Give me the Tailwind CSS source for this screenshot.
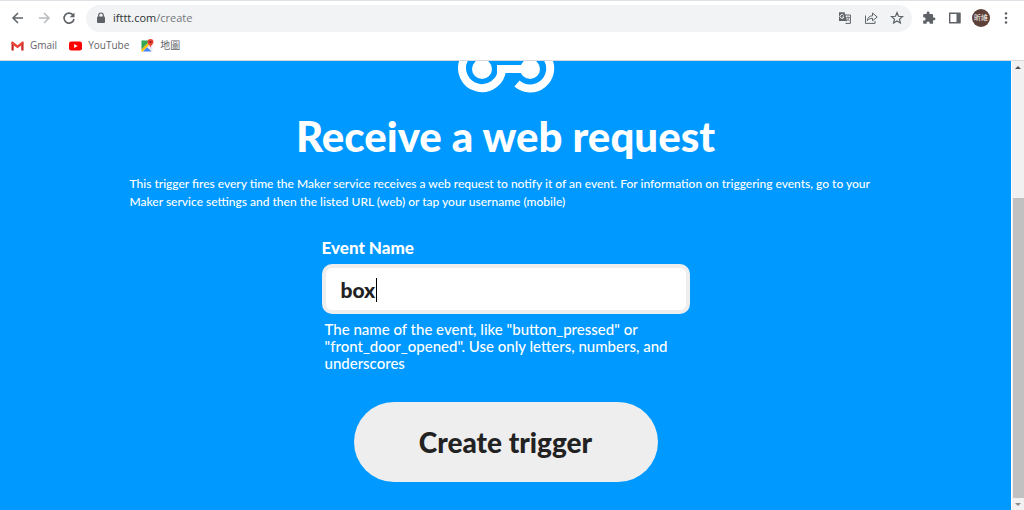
<!DOCTYPE html>
<html lang="en">
<head>
<meta charset="utf-8">
<meta name="viewport" content="width=device-width, initial-scale=1">
<title>ifttt.com/create</title>
<script src="https://cdn.jsdelivr.net/npm/@tailwindcss/browser@4"></script>
</head>
<body class="flex h-screen flex-col overflow-hidden bg-white font-['Lato','Noto_Sans_CJK_TC',sans-serif]">
<header class="shrink-0 border-t border-b border-t-[#dee1e6] border-b-[#d5d8dc] font-['Open_Sans','Noto_Sans_CJK_TC',sans-serif] text-[#5f6368]">
  <div class="flex h-[34px] items-center pr-[11px] pl-2.5">
    <button class="grid size-4 place-items-center" aria-label="Back"><svg class="size-4" viewBox="0 0 16 16" fill="none" stroke="#5f6368" stroke-width="1.5"><path d="M13 8H3M8 3L3 8l5 5"/></svg></button>
    <button class="ml-2.5 grid size-4 place-items-center" aria-label="Forward"><svg class="size-4" viewBox="0 0 16 16" fill="none" stroke="#b9bbbe" stroke-width="1.5"><path d="M3 8h10M8 3l5 5-5 5"/></svg></button>
    <button class="ml-[9px] grid size-4 place-items-center" aria-label="Reload"><svg class="size-4" viewBox="0 0 16 16" fill="none" stroke="#5f6368" stroke-width="1.6"><path d="M12.2 5.3A5 5 0 1 0 13 9"/><path d="M13.5 2.5v4.8H8.7z" fill="#5f6368" stroke="none"/></svg></button>
    <div class="ml-[9px] flex h-[27px] flex-1 items-center rounded-full bg-[#f1f3f4] pr-2 pl-2">
      <svg class="size-3.5" viewBox="0 0 14 14" fill="#5f6368"><rect x="3" y="5.5" width="8" height="6.5" rx="1"/><path d="M4.700 6V4.300a2.300 2.300 0 0 1 4.600 0V6" fill="none" stroke="#5f6368" stroke-width="1.2"/></svg>
      <span class="relative ml-[5px] flex h-5 flex-1 text-[11px] leading-5">
        <input class="w-full bg-transparent text-transparent outline-none" aria-label="Address" value="ifttt.com/create">
        <span class="pointer-events-none absolute inset-0 text-[#303236]" aria-hidden="true">ifttt.com<span class="text-[#74787c]">/create</span></span>
      </span>
      <button aria-label="Translate"><svg class="size-3.5" viewBox="0 0 14 14"><path d="M6 4h6.400v8.400H7.500" fill="#f1f3f4" stroke="#5f6368"/><path d="M1 1.200h5.600L9 10H1z" fill="#5f6368"/><path d="M5.800 4.400A2 2 0 1 0 6 6H4.200" fill="none" stroke="#fff" stroke-width=".9"/><path d="M8.200 6.500h3.600M10 5.400v1M11 6.500c-.3 1.600-1.300 2.800-2.400 3.600M9 7.400l2.400 2.800" fill="none" stroke="#5f6368" stroke-width=".8"/></svg></button>
      <button class="ml-3" aria-label="Share"><svg class="size-3.5" viewBox="0 0 14 14" fill="none" stroke="#5f6368"><path d="M1.500 4.500v7.900h9.500V10"/><path d="M3.300 9.700c.3-3 2-4.800 5.200-4.900V2L13.200 6 8.500 9.800V7.300c-2.200 0-3.900.8-5.200 2.400z"/></svg></button>
      <button class="ml-3" aria-label="Bookmark"><svg class="size-3.5" viewBox="0 0 14 14" fill="none" stroke="#5f6368" stroke-width="1.200"><path d="M7 1.600l1.500 3.700 4 .3-3 2.600.9 3.900L7 10l-3.400 2.100.9-3.900-3-2.600 4-.3z"/></svg></button>
    </div>
    <button class="ml-2.5 size-3.5" aria-label="Extensions"><svg class="size-3.5" viewBox="0 0 24 24" fill="#5f6368"><path d="M20.500 11H19V7a2 2 0 0 0-2-2h-4V3.500a2.500 2.500 0 0 0-5 0V5H4a2 2 0 0 0-2 2v3.800h1.500a2.700 2.700 0 0 1 0 5.400H2V20a2 2 0 0 0 2 2h3.800v-1.500a2.700 2.700 0 0 1 5.400 0V22H17a2 2 0 0 0 2-2v-4h1.500a2.500 2.500 0 0 0 0-5z"/></svg></button>
    <button class="ml-3 size-3.5" aria-label="Side panel"><svg class="size-3.5" viewBox="0 0 14 14"><path d="M1.700 2.200h10.100v9.600H1.700z" fill="none" stroke="#5f6368" stroke-width="1.400"/><path d="M8.500 2h4v10h-4z" fill="#5f6368"/></svg></button>
    <button class="ml-2.5 size-[18px] rounded-full bg-[#5d4037] text-center text-[7px] leading-[18px] text-white" aria-label="Profile">昕維</button>
    <button class="ml-[9px] size-3.5" aria-label="Menu"><svg class="size-3.5" viewBox="0 0 14 14" fill="#5f6368"><circle cx="7" cy="2.500" r="1.300"/><circle cx="7" cy="7" r="1.300"/><circle cx="7" cy="11.500" r="1.300"/></svg></button>
  </div>
  <nav class="flex h-[25px] items-center gap-3 pb-1 pl-[11px] text-[10px]" aria-label="Bookmarks">
    <a href="#" class="flex items-center gap-1.5"><svg class="h-3 w-[13px]" viewBox="0 0 13 12"><path d="M.5 2v8.500h2.200V5z" fill="#c5221f"/><path d="M12.500 2v8.500h-2.200V5z" fill="#c5221f"/><path d="M.5 1.500h1.300L6.500 5.200l4.700-3.700h1.300v2.300L6.500 8.200.5 3.800z" fill="#ea4335"/></svg>Gmail</a>
    <a href="#" class="flex items-center gap-1.5"><svg class="h-3 w-[13px]" viewBox="0 0 13 12"><rect y="1.500" width="13" height="9" rx="2.200" fill="#f00"/><path d="M5.200 4v4l3.400-2z" fill="#fff"/></svg>YouTube</a>
    <a href="#" class="flex items-center gap-1.5"><svg class="size-[13px]" viewBox="0 0 13 13"><rect x=".5" y="1.500" width="11" height="11" rx="1" fill="#e8eaed"/><path d="M.5 1.500h9L.5 10.500z" fill="#34a853"/><path d="M2 12.500l4-4.200 4.500 4.200z" fill="#4285f4"/><path d="M.5 12.500v-2L8 3l1.500 1.500-8 8z" fill="#fbbc04"/><path d="M9.500 0a3 3 0 0 0-3 3c0 2.200 2.400 2.800 3 5.500.6-2.700 3-3.300 3-5.500a3 3 0 0 0-3-3z" fill="#ea4335"/><circle cx="9.500" cy="3" r="1" fill="#811411"/></svg>地圖</a>
  </nav>
</header>
<div class="flex min-h-0 flex-1">
  <main class="flex flex-1 flex-col items-center overflow-hidden bg-[#0099ff] text-white">
    <svg class="h-8 w-[98px] shrink-0" viewBox="-1 0 98 32" fill="none" aria-label="Webhooks"><g stroke="#fff" stroke-width="8"><path d="M6.200-2A20 20 0 1 0 44 8"/><path d="M39 8H72"/><path d="M89.800-2A20 20 0 0 1 59 22.500"/></g><circle cx="24" cy="8" r="10" fill="#fff"/><circle cx="72" cy="8" r="10" fill="#fff"/></svg>
    <h1 class="mt-[19px] text-[42px] leading-12 font-black whitespace-nowrap">Receive a web request</h1>
    <p class="mt-[15px] w-[752px] text-xs leading-[18px] font-medium">This trigger fires every time the Maker service receives a web request to notify it of an event. For information on triggering events, go to your<br>Maker service settings and then the listed URL (web) or tap your username (mobile)</p>
    <form class="mt-[27px] flex w-[368px] flex-col">
      <label for="event" class="text-[17px] leading-5 font-black">Event Name</label>
      <div class="relative mt-1.5">
        <input id="event" class="block h-[50px] w-full rounded-[10px] border-4 border-[#eee] bg-white pl-[15px] text-[21px] font-black text-[#222] outline-none" value="box">
        <span class="absolute top-[14px] left-[54px] h-6 w-px bg-black"></span>
      </div>
      <p class="mt-[7px] pl-[3px] text-[15px] leading-[17px] font-medium">The name of the event, like "button_pressed" or<br>"front_door_opened". Use only letters, numbers, and<br>underscores</p>
      <button type="button" class="mt-[30px] h-20 w-[304px] self-center rounded-full bg-[#eee] text-[28px] font-black text-[#222]">Create trigger</button>
    </form>
  </main>
  <div class="flex w-[13px] shrink-0 flex-col items-center border-l border-white bg-[#f1f1f1]" aria-hidden="true">
    <svg class="h-[13px] w-3" viewBox="0 0 12 13"><path d="M3 8l3-3 3 3z" fill="#505050"/></svg>
    <div class="mt-[124px] w-[11px] flex-1 bg-[#c1c1c1]"></div>
    <svg class="h-3 w-3" viewBox="0 0 12 12"><path d="M3 5l3 3 3-3z" fill="#8a8a8a"/></svg>
  </div>
</div>
</body>
</html>
